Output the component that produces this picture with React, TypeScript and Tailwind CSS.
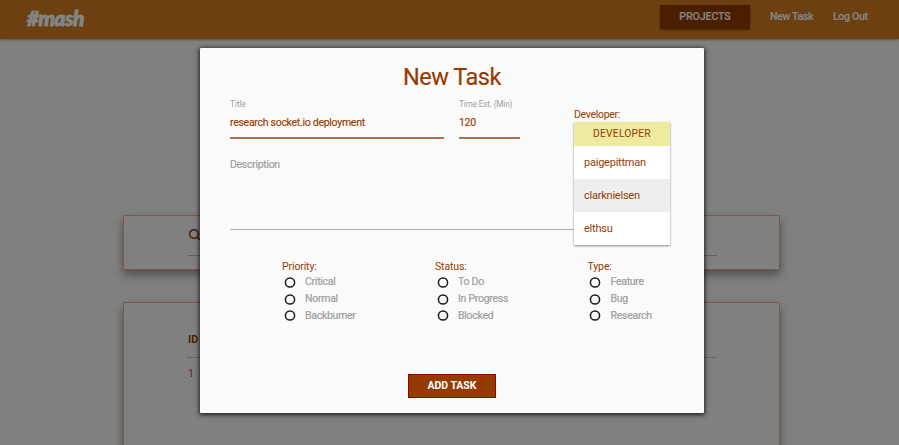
import { Search } from "lucide-react";

function RadioGroup({ title, options, className }: { title: string; options: string[]; className: string }) {
  return (
    <fieldset className={className}>
      <legend className="h-[15px] text-[10.5px] leading-[15px] tracking-[-0.12px] text-[#963c00]">{title}</legend>
      {options.map((option) => (
        <label key={option} className="flex h-[16.7px] items-center pl-[2.5px] text-[10.5px] tracking-[-0.27px] text-[#9e9e9e]">
          <svg viewBox="0 0 11 11" className="mr-[9.5px] size-[11px] shrink-0 overflow-visible">
            <circle cx="5" cy="5.5" r="4.6" fill="none" stroke="#1a1a1a" strokeWidth="1.5" />
          </svg>
          <span className="whitespace-nowrap [-webkit-text-stroke:0.2px_#9e9e9e]">{option}</span>
        </label>
      ))}
    </fieldset>
  );
}

function Dropdown() {
  const names = ["paigepittman", "clarknielsen", "elthsu"];
  return (
    <div className="absolute top-[74px] left-[374px] w-[96px] bg-white text-[#963c00] shadow-[0_1px_2px_rgba(0,0,0,0.45)]">
      <div className="h-[24px] bg-[#eeeaa0] text-center text-[10.3px] leading-[24px] tracking-[0.2px]">DEVELOPER</div>
      {names.map((name) => (
        <div
          key={name}
          className={`h-[33px] pl-[10px] text-[11px] leading-[33px] tracking-[-0.23px] ${name === "clarknielsen" ? "bg-[#eeeeee]" : "bg-white"}`}
        >
          {name}
        </div>
      ))}
    </div>
  );
}

function TaskModal() {
  return (
    <div className="relative h-[365px] w-[504px] rounded-[1px] bg-[#fafafa] pl-[30px] shadow-[0_1px_4px_1px_rgba(0,0,0,0.75)]">
      <h1 className="h-[50px] pt-[13px] pr-[30px] text-center text-[23.5px] leading-[32px] tracking-[-0.5px] text-[#963c00] [-webkit-text-stroke:0.2px_#963c00]">New Task</h1>
      <div className="flex h-[56px] gap-[15px]">
        <div className="h-[41px] w-[214px] border-b-2 border-[#b0714c]">
          <div className="h-[13px] text-[8.2px] leading-[13px] text-[#9e9e9e]">Title</div>
          <div className="mt-[5px] text-[10.5px] leading-[14px] tracking-[-0.28px] text-[#963c00] [-webkit-text-stroke:0.15px_#963c00]">
            research socket.io deployment
          </div>
        </div>
        <div className="h-[41px] w-[61px] border-b-2 border-[#b0714c]">
          <div className="h-[13px] text-[8.2px] leading-[13px] tracking-[-0.15px] whitespace-nowrap text-[#9e9e9e]">Time Est. (Min)</div>
          <div className="mt-[5px] text-[10.5px] leading-[14px] tracking-[-0.3px] text-[#963c00] [-webkit-text-stroke:0.15px_#963c00]">120</div>
        </div>
        <div className="ml-[39px] pt-[9px] text-[10.5px] leading-[15px] tracking-[-0.3px] text-[#963c00]">Developer:</div>
      </div>
      <div className="h-[76px] w-[440px] border-b border-[#b0b0b0] pt-[3px] text-[10.5px] leading-[16px] tracking-[-0.3px] text-[#9e9e9e] [-webkit-text-stroke:0.2px_#9e9e9e]">
        Description
      </div>
      <div className="mt-[29px] flex pl-[52px]">
        <RadioGroup className="w-[153px]" title="Priority:" options={["Critical", "Normal", "Backburner"]} />
        <RadioGroup className="w-[152.5px]" title="Status:" options={["To Do", "In Progress", "Blocked"]} />
        <RadioGroup className="w-[90px]" title="Type:" options={["Feature", "Bug", "Research"]} />
      </div>
      <button className="mt-[50px] ml-[178px] block h-[24px] w-[88px] border border-[#990000] bg-[#943c00] text-[10.5px] leading-[20px] font-bold tracking-[-0.05px] text-white">
        ADD TASK
      </button>
      <Dropdown />
    </div>
  );
}

export default function App() {
  return (
    <div className="relative h-[445px] w-[899px] overflow-hidden bg-[#808080] font-[Roboto,sans-serif]">
      <header className="flex h-[39px] items-start bg-[#6c4010] pl-[27px] text-[10.7px] font-medium text-[#848484] shadow-[0_1px_2px_rgba(0,0,0,0.35)]">
        <div className="w-[633px] pt-[5px] font-[Lato,sans-serif] text-[20px] leading-[26px] font-black tracking-[-0.5px] italic [-webkit-text-stroke:0.9px_#848484]">
          <span className="inline-block origin-left scale-x-[1.04] scale-y-[1.06]">#mash</span>
        </div>
        <nav className="flex pt-[5px] leading-[24px] [-webkit-text-stroke:0.2px_#848484]">
          <a className="block w-[90px] rounded-[1px] bg-[#4c1e00] text-center tracking-[-0.15px] shadow-[0_1px_2px_rgba(0,0,0,0.4)]">PROJECTS</a>
          <a className="ml-[20px] w-[63px] tracking-[-0.4px]">New Task</a>
          <a className="tracking-[-0.4px]">Log Out</a>
        </nav>
      </header>
      <main className="pt-[176px] pr-[119px] pl-[123px]">
        <section className="h-[55px] rounded-[2px] border border-[#805840] pt-[12px] pr-[62px] pl-[64px] shadow-[0_5px_10px_rgba(0,0,0,0.4)]">
          <Search className="size-[13px] text-[#4d1f00]" strokeWidth={3} />
          <div className="mt-[14px] border-b border-[#606060]" />
        </section>
        <section className="mt-[32px] h-[200px] rounded-[2px] border border-[#805840] pt-[28px] pr-[62px] pl-[62px] text-[10.7px] shadow-[0_5px_10px_rgba(0,0,0,0.4)]">
          <div className="h-[27px] border-b border-[#686868] pl-[2px] leading-[18px] font-bold text-[#4d1f00]">ID</div>
          <div className="pt-[8px] pl-[2px] leading-[16px] text-[#4b3030]">1</div>
        </section>
      </main>
      <div className="absolute inset-0 flex justify-center pt-[48px] pl-[5px]">
        <TaskModal />
      </div>
    </div>
  );
}
